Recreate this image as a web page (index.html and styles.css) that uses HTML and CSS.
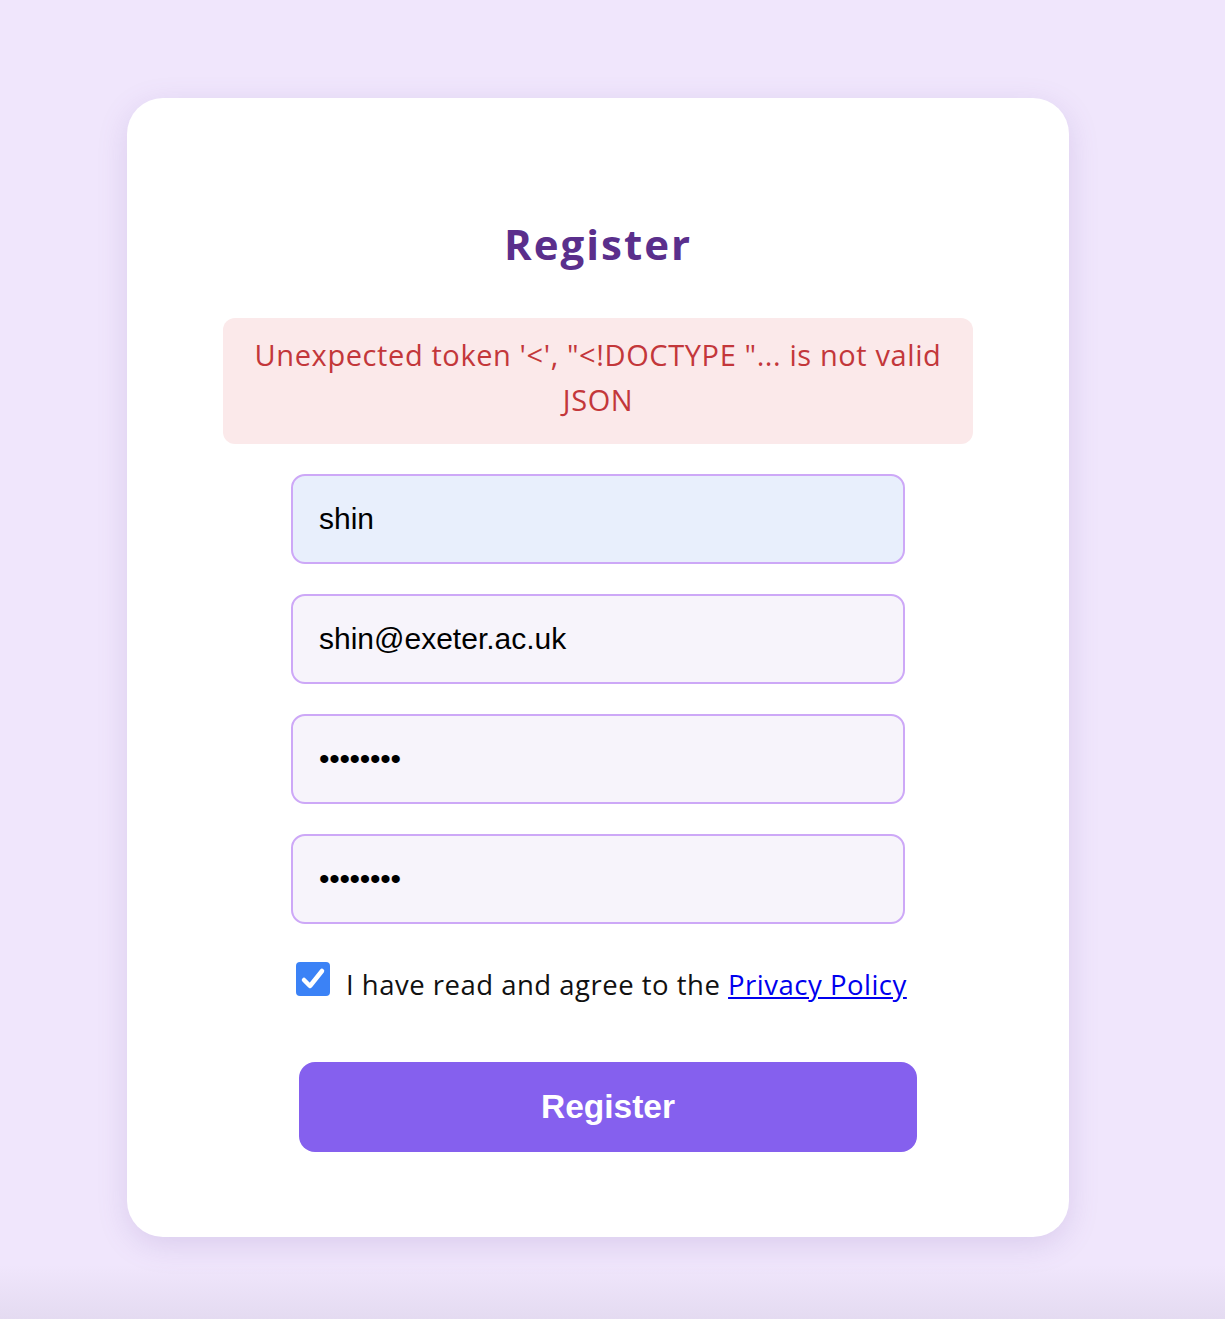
FILE: index.html
```html
<!DOCTYPE html>
<html lang="en">
<head>
<meta charset="utf-8">
<title>Register</title>
<link rel="stylesheet" href="styles.css">
</head>
<body>
<main class="page">
  <section class="card">
    <h1 class="title">Register</h1>
    <div class="error">Unexpected token '&lt;', "&lt;!DOCTYPE "... is not valid JSON</div>
    <form class="form">
      <input class="field autofill" type="text" value="shin">
      <input class="field" type="email" value="shin@exeter.ac.uk">
      <input class="field" type="password" value="12345678">
      <input class="field" type="password" value="12345678">
      <label class="agree">
        <span class="box"><svg viewBox="0 0 34 34" width="34" height="34"><rect x="0" y="0" width="34" height="34" rx="4" fill="#3b82f6"/><path d="M8 18 L14 24 L26 9" fill="none" stroke="#fff" stroke-width="4.5" stroke-linecap="round" stroke-linejoin="round"/></svg></span>
        <span class="agree-text">I have read and agree to the <a href="#" class="link">Privacy Policy</a></span>
      </label>
      <button type="button" class="submit">Register</button>
    </form>
  </section>
</main>
</body>
</html>
```
FILE: styles.css
```css
html, body {
  margin: 0;
  padding: 0;
}
body {
  background: linear-gradient(to bottom, #f0e6fc 0, #f0e6fc 1265px, #e4dbf1 1319px);
  min-height: 1319px;
  font-family: "Liberation Sans", Arial, sans-serif;
}
.page {
  padding: 98px 0 0 127px;
}
.card {
  width: 942px;
  height: 1139px;
  box-sizing: border-box;
  background: #fff;
  border-radius: 36px;
  box-shadow: 0 8px 30px rgba(120, 90, 170, 0.18);
  padding: 125px 96px 0;
  display: flex;
  flex-direction: column;
  align-items: center;
}
.title {
  margin: 0;
  font-family: "Open Sans", sans-serif;
  font-weight: 700;
  font-size: 42px;
  line-height: 1;
  color: #5a2f8c;
  letter-spacing: 2px;
}
.error {
  margin-top: 53px;
  width: 750px;
  height: 126px;
  box-sizing: border-box;
  background: #fbe9ea;
  border-radius: 12px;
  padding: 14px 20px 0;
  text-align: center;
  font-family: "Open Sans", sans-serif;
  font-size: 29px;
  letter-spacing: 0.6px;
  line-height: 45px;
  color: #c3373a;
}
.form {
  margin-top: 30px;
  width: 614px;
  display: flex;
  flex-direction: column;
}
.field {
  height: 90px;
  box-sizing: border-box;
  border: 2px solid #cda8f7;
  border-radius: 14px;
  background: #f7f4fb;
  padding: 0 0 0 26px;
  margin: 0 0 30px;
  font-family: "Liberation Sans", Arial, sans-serif;
  font-size: 30px;
  color: #000;
  outline: none;
}
.field.autofill {
  background: #e8effc;
}
.field[type="password"] {
  font-size: 30px;
  letter-spacing: -0.3px;
}
.agree {
  display: flex;
  align-items: flex-start;
  margin: 8px 0 0 5px;
  height: 62px;
}
.box {
  width: 34px;
  height: 34px;
  display: block;
}
.box svg {
  display: block;
}
.agree-text {
  margin-left: 16px;
  margin-top: 6px;
  font-family: "Open Sans", sans-serif;
  font-size: 27.5px;
  letter-spacing: 0.5px;
  line-height: 34px;
  color: #111;
  white-space: nowrap;
}
.link {
  color: #0000ee;
  text-decoration: underline;
}
.submit {
  margin: 38px 0 0 8px;
  width: 618px;
  height: 90px;
  border: none;
  border-radius: 16px;
  background: #8560ee;
  color: #fff;
  font-family: "Liberation Sans", Arial, sans-serif;
  font-weight: 700;
  font-size: 33.5px;
  cursor: pointer;
}
```
